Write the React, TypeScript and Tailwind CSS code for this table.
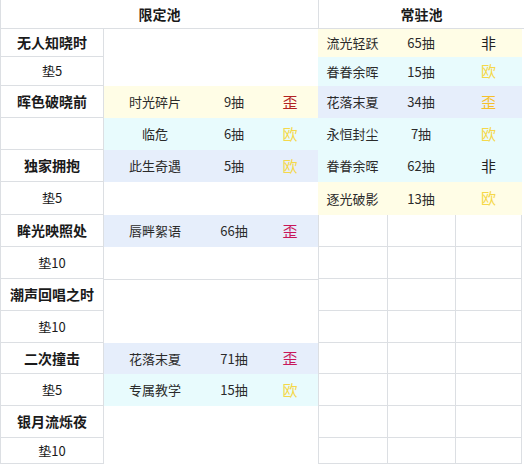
import React from "react";

type Tone = "yellow" | "cyan" | "blue" | "none";

const bgOf: Record<Tone, string> = {
  yellow: "bg-[#fffde6]",
  cyan: "bg-[#e8fbfd]",
  blue: "bg-[#e6eefb]",
  none: "bg-white",
};

const WAI_RED = "text-[#b22222]";
const WAI_CRIM = "text-[#c8175a]";
const WAI_GOLD = "text-[#f6c02a]";
const OU = "text-[#f5d84a]";
const FEI = "text-[#222]";

const heights = [28, 29, 32, 32, 32, 33, 32, 32, 32, 32, 31, 32, 32, 26];

const colA: { t: string; bold: boolean }[] = [
  { t: "无人知晓时", bold: true },
  { t: "垫5", bold: false },
  { t: "晖色破晓前", bold: true },
  { t: "", bold: false },
  { t: "独家拥抱", bold: true },
  { t: "垫5", bold: false },
  { t: "眸光映照处", bold: true },
  { t: "垫10", bold: false },
  { t: "潮声回唱之时", bold: true },
  { t: "垫10", bold: false },
  { t: "二次撞击", bold: true },
  { t: "垫5", bold: false },
  { t: "银月流烁夜", bold: true },
  { t: "垫10", bold: false },
];

type Entry = { name: string; n: string; mark: { t: string; c: string }; tone: Tone } | null;

const left: Entry[] = [
  null,
  null,
  { name: "时光碎片", n: "9抽", mark: { t: "歪", c: WAI_RED }, tone: "yellow" },
  { name: "临危", n: "6抽", mark: { t: "欧", c: OU }, tone: "cyan" },
  { name: "此生奇遇", n: "5抽", mark: { t: "欧", c: OU }, tone: "blue" },
  null,
  { name: "唇畔絮语", n: "66抽", mark: { t: "歪", c: WAI_CRIM }, tone: "blue" },
  null,
  null,
  null,
  { name: "花落末夏", n: "71抽", mark: { t: "歪", c: WAI_CRIM }, tone: "blue" },
  { name: "专属教学", n: "15抽", mark: { t: "欧", c: OU }, tone: "cyan" },
  null,
  null,
];

const right: Entry[] = [
  { name: "流光轻跃", n: "65抽", mark: { t: "非", c: FEI }, tone: "yellow" },
  { name: "眷眷余晖", n: "15抽", mark: { t: "欧", c: OU }, tone: "cyan" },
  { name: "花落末夏", n: "34抽", mark: { t: "歪", c: WAI_GOLD }, tone: "blue" },
  { name: "永恒封尘", n: "7抽", mark: { t: "欧", c: OU }, tone: "cyan" },
  { name: "眷眷余晖", n: "62抽", mark: { t: "非", c: FEI }, tone: "cyan" },
  { name: "逐光破影", n: "13抽", mark: { t: "欧", c: OU }, tone: "yellow" },
  null,
  null,
  null,
  null,
  null,
  null,
  null,
  null,
];

const font = { fontFamily: '"Noto Sans CJK SC", "Noto Sans", sans-serif' };

function Row({ i }: { i: number }) {
  const a = colA[i];
  const l = left[i];
  const r = right[i];
  const h = heights[i];
  const leftTopLine = i === 8 ? "border-t border-[#dcdfe3]" : "";
  return (
    <div className="flex" style={{ height: h }}>
      <div
        className={`w-[104px] shrink-0 flex items-center justify-center border-l border-r border-b border-[#dcdfe3] text-[#1a1a1a] ${
          a.bold ? "font-bold text-[14px]" : "text-[13px]"
        }`}
      >
        {a.t}
      </div>
      <div className={`flex ${leftTopLine} ${l ? bgOf[l.tone] : "bg-white"}`}>
        <div className="w-[102px] flex items-center justify-center text-[13px] text-[#2a2a2a]">{l?.name}</div>
        <div className="w-[56px] flex items-center justify-center text-[13px] text-[#2a2a2a]">{l?.n}</div>
        <div className={`w-[56px] flex items-center justify-center text-[15px] ${l?.mark.c ?? ""}`}>{l?.mark.t}</div>
      </div>
      {r ? (
        <div className={`flex ${bgOf[r.tone]}`}>
          <div className="w-[69px] flex items-center justify-center text-[13px] text-[#2a2a2a]">{r.name}</div>
          <div className="w-[68px] flex items-center justify-center text-[13px] text-[#2a2a2a]">{r.n}</div>
          <div className={`w-[67px] flex items-center justify-center text-[15px] ${r.mark.c}`}>{r.mark.t}</div>
        </div>
      ) : (
        <div className="flex">
          <div className="w-[69px] border-l border-b border-[#dcdfe3]" />
          <div className="w-[68px] border-l border-b border-[#dcdfe3]" />
          <div className="w-[67px] border-l border-r border-b border-[#dcdfe3]" />
        </div>
      )}
    </div>
  );
}

export default function App() {
  return (
    <div className="w-[524px] h-[466px] overflow-hidden bg-white" style={font}>
      <div className="flex h-[29px] border-b border-[#dcdfe3]">
        <div className="w-[318px] flex items-center justify-center font-bold text-[14px] text-[#1a1a1a] border-l border-[#dcdfe3]">
          限定池
        </div>
        <div className="w-[206px] flex items-center justify-center font-bold text-[14px] text-[#1a1a1a] border-l border-[#dcdfe3]">
          常驻池
        </div>
      </div>
      {heights.map((_, i) => (
        <Row key={i} i={i} />
      ))}
    </div>
  );
}
